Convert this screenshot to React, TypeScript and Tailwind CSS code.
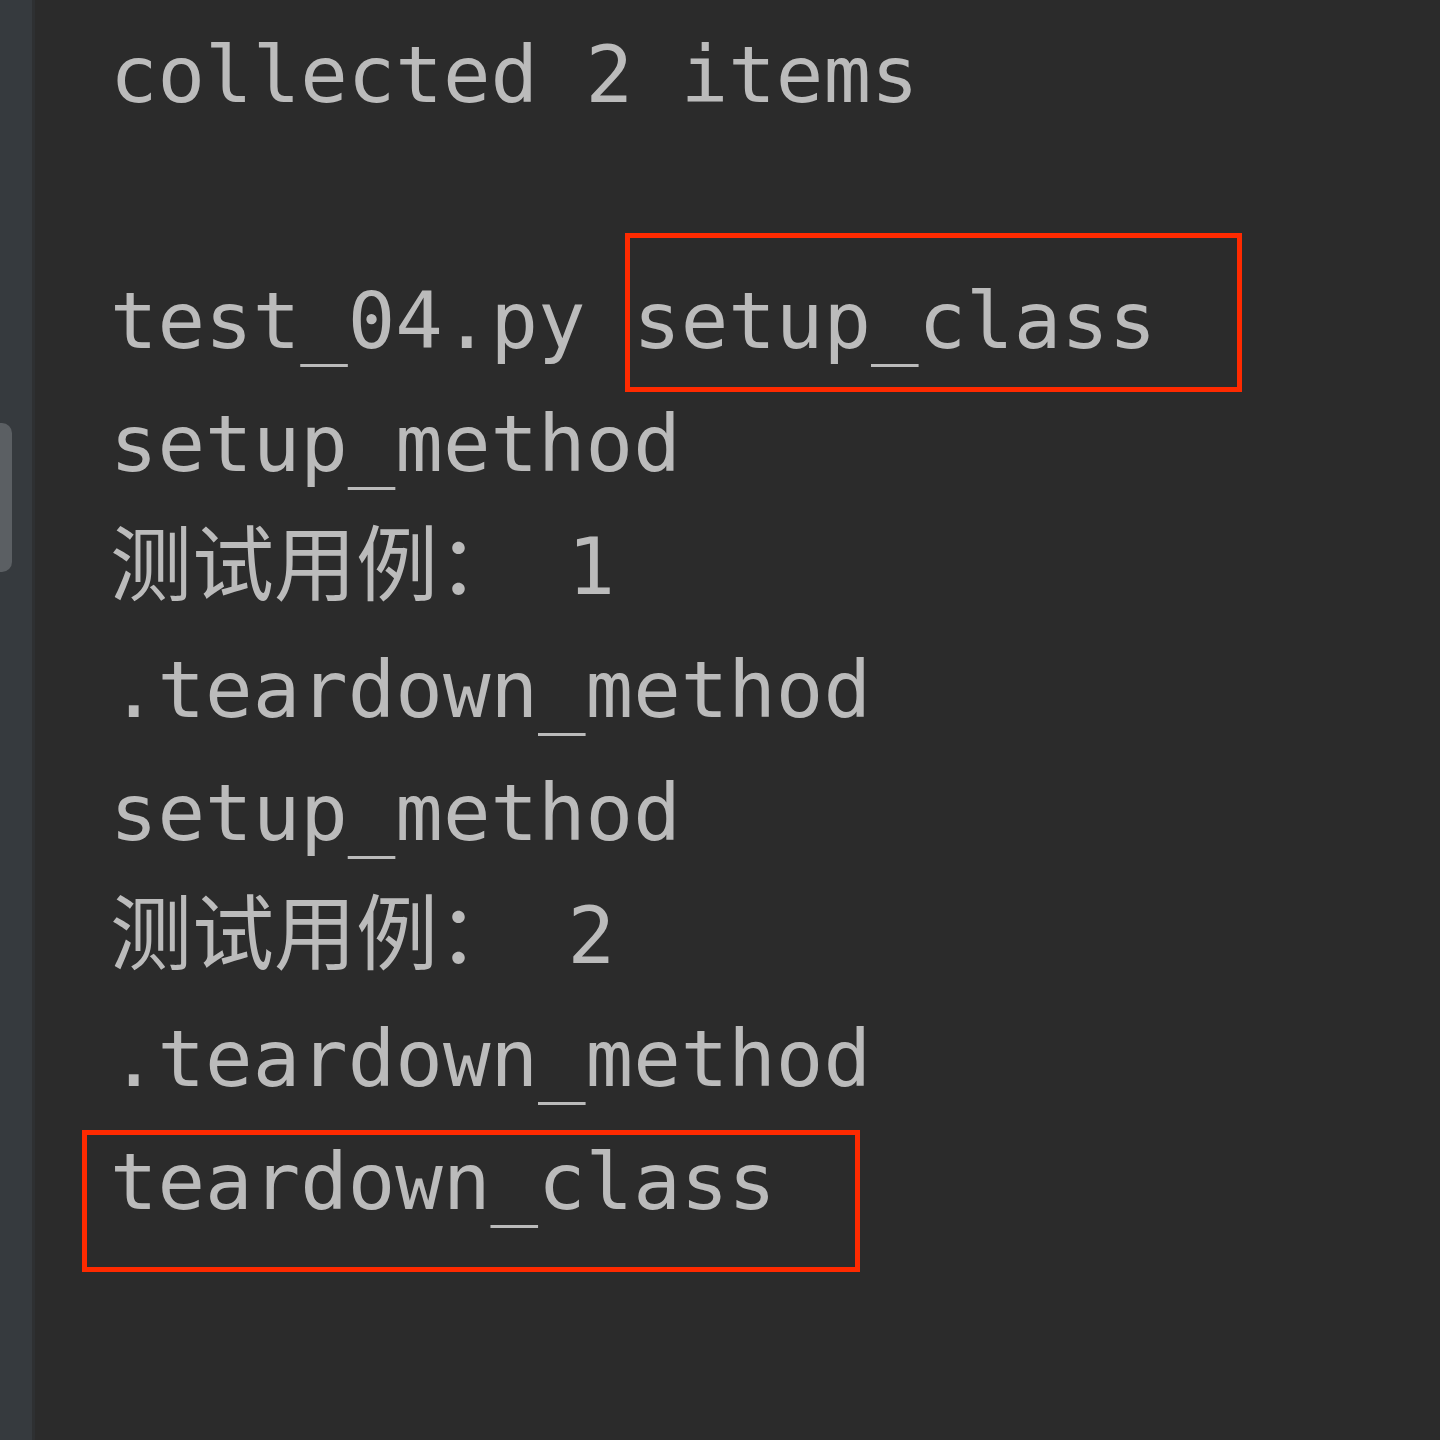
import React from "react";

type Line = { cjk?: string; text: string };

const lines: Line[] = [
  { text: "collected 2 items" },
  { text: "" },
  { text: "test_04.py setup_class" },
  { text: "setup_method" },
  { cjk: "测试用例：", text: " 1" },
  { text: ".teardown_method" },
  { text: "setup_method" },
  { cjk: "测试用例：", text: " 2" },
  { text: ".teardown_method" },
  { text: "teardown_class" },
  { text: "" },
];

export default function App() {
  return (
    <div className="relative flex w-[1440px] h-[1440px] overflow-hidden bg-[#2b2b2b]">
      <div className="w-[35px] shrink-0 bg-[#363a3e] border-r-[3px] border-[#2e3032] pt-[423px]">
        <div className="w-[12px] h-[149px] rounded-r-[10px] bg-[#5b5f63]" />
      </div>
      <div
        className="pl-[75px] pt-[14px] text-[79px] leading-[123px] text-[#bbbbbb] whitespace-pre"
        style={{ fontFamily: '"DejaVu Sans Mono", "Noto Sans CJK SC", monospace' }}
      >
        {lines.map((l, i) => (
          <div key={i} className="h-[123px]">
            {l.cjk ? (
              <span
                className="text-[82px] leading-none"
                style={{ fontFamily: '"Noto Sans CJK SC", sans-serif' }}
              >
                {l.cjk}
              </span>
            ) : null}
            {l.text}
          </div>
        ))}
      </div>
      <div className="absolute left-[625px] top-[233px] w-[617px] h-[159px] border-[5px] border-[#fe2a00]" />
      <div className="absolute left-[82px] top-[1130px] w-[778px] h-[142px] border-[5px] border-[#fe2a00]" />
    </div>
  );
}
